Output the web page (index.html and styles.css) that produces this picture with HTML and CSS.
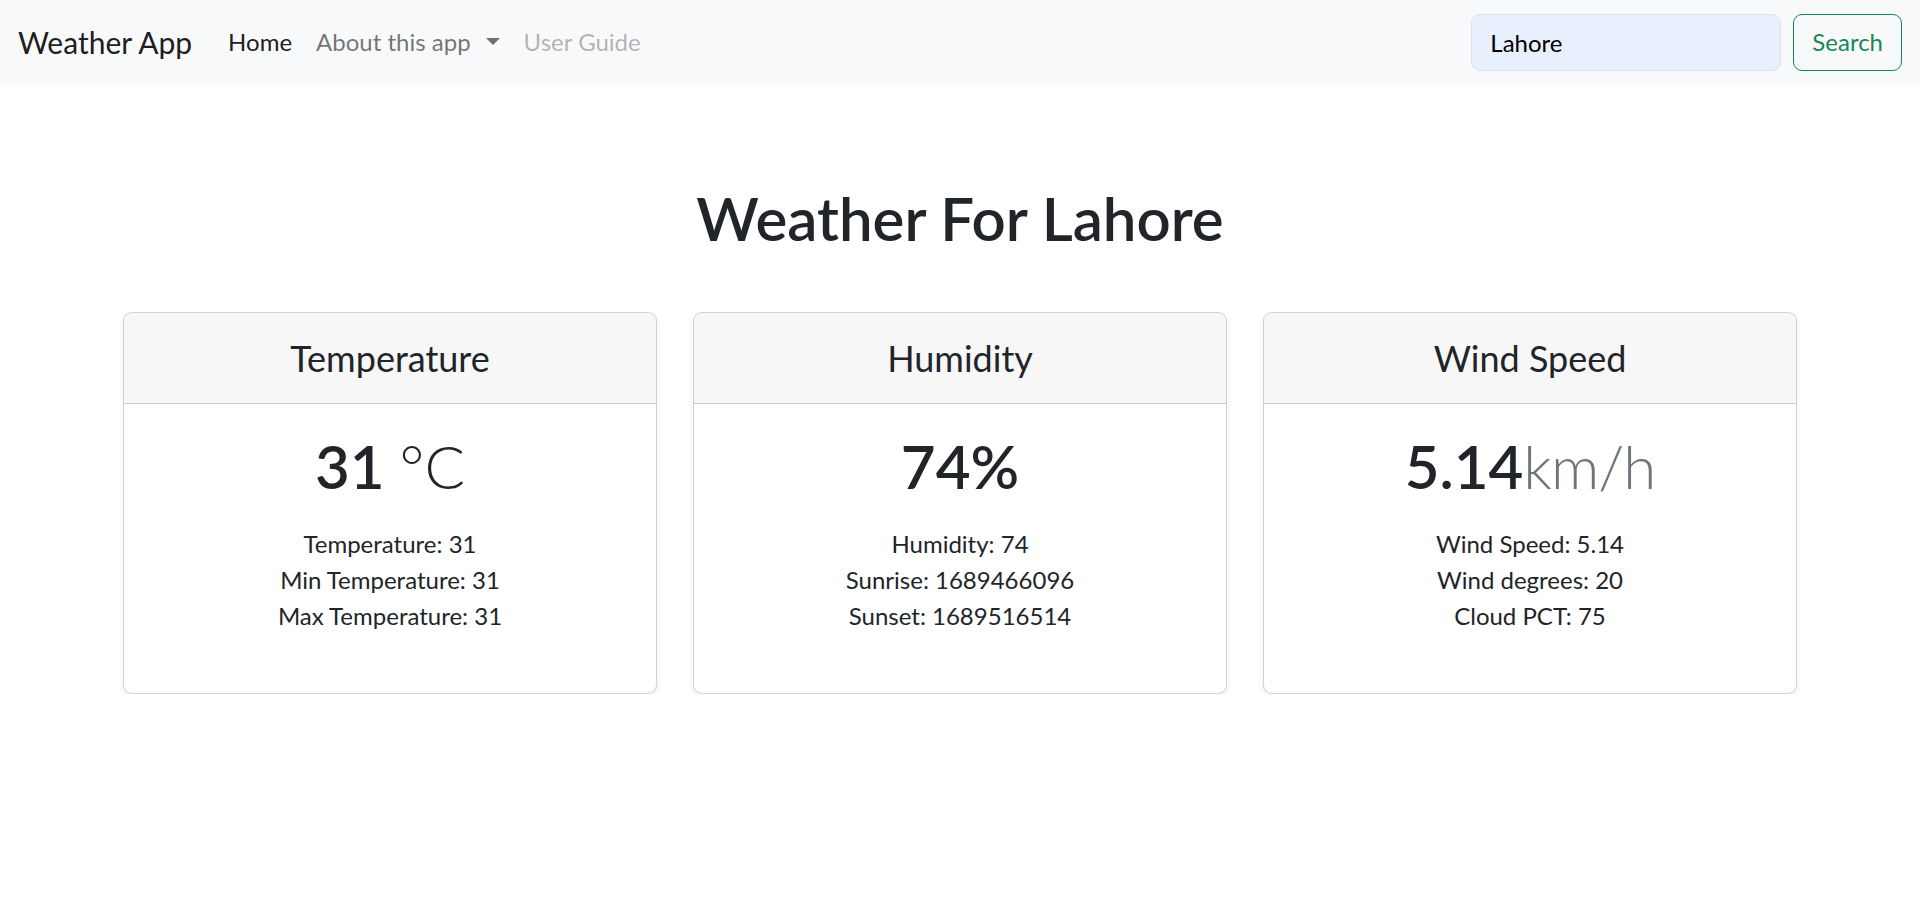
FILE: index.html
```html
<!DOCTYPE html>
<html lang="en">
<head>
<meta charset="utf-8">
<title>Weather App</title>
<link rel="stylesheet" href="styles.css">
</head>
<body>
<nav class="navbar">
  <div class="nav-left">
    <a class="brand" href="#">Weather App</a>
    <ul class="nav-list">
      <li><a class="nav-link active" href="#">Home</a></li>
      <li><a class="nav-link dropdown" href="#">About this app</a></li>
      <li><a class="nav-link disabled">User Guide</a></li>
    </ul>
  </div>
  <form class="search-form">
    <input class="search-input" type="search" value="Lahore" aria-label="Search">
    <button class="search-btn" type="button">Search</button>
  </form>
</nav>

<main class="container">
  <div class="page-header">
    <h1 class="page-title">Weather For Lahore</h1>
  </div>

  <div class="card-row">
    <div class="card">
      <div class="card-header"><h4 class="card-heading">Temperature</h4></div>
      <div class="card-body">
        <h1 class="card-title">31 <span class="unit-light">°C</span></h1>
        <ul class="stats">
          <li>Temperature: 31</li>
          <li>Min Temperature: 31</li>
          <li>Max Temperature: 31</li>
        </ul>
      </div>
    </div>

    <div class="card">
      <div class="card-header"><h4 class="card-heading">Humidity</h4></div>
      <div class="card-body">
        <h1 class="card-title">74%</h1>
        <ul class="stats">
          <li>Humidity: 74</li>
          <li>Sunrise: 1689466096</li>
          <li>Sunset: 1689516514</li>
        </ul>
      </div>
    </div>

    <div class="card">
      <div class="card-header"><h4 class="card-heading">Wind Speed</h4></div>
      <div class="card-body">
        <h1 class="card-title">5.14<span class="unit-muted">km/h</span></h1>
        <ul class="stats">
          <li>Wind Speed: 5.14</li>
          <li>Wind degrees: 20</li>
          <li>Cloud PCT: 75</li>
        </ul>
      </div>
    </div>
  </div>
</main>
</body>
</html>
```
FILE: styles.css
```css
* { box-sizing: border-box; }

body {
  margin: 0;
  font-family: Lato, "Open Sans", sans-serif;
  font-size: 24px;
  line-height: 1.5;
  color: #212529;
  background: #fff;
}

a { text-decoration: none; }

/* Navbar */
.navbar {
  display: flex;
  align-items: center;
  justify-content: space-between;
  background: #f8f9fa;
  padding: 12px 18px;
  height: 84px;
}
.nav-left {
  display: flex;
  align-items: center;
}
.brand {
  font-size: 30px;
  line-height: 45px;
  padding: 7.5px 0;
  margin-right: 24px;
  color: rgba(0, 0, 0, 0.9);
}
.nav-list {
  display: flex;
  list-style: none;
  margin: 0;
  padding: 0;
}
.nav-link {
  display: block;
  padding: 12px;
  font-size: 24px;
  line-height: 36px;
  color: rgba(0, 0, 0, 0.55);
}
.nav-link.active { color: rgba(0, 0, 0, 0.9); }
.nav-link.disabled { color: rgba(0, 0, 0, 0.3); }
.dropdown::after {
  content: "";
  display: inline-block;
  margin-left: 15px;
  vertical-align: 6px;
  border-top: 7px solid;
  border-right: 7px solid transparent;
  border-left: 7px solid transparent;
  border-bottom: 0;
}

.search-form {
  display: flex;
  align-items: center;
}
.search-input {
  width: 310px;
  height: 57px;
  margin-right: 12px;
  padding: 9px 18px;
  font-family: inherit;
  font-size: 24px;
  line-height: 36px;
  color: #000;
  background: #e8f0fe;
  border: 1.5px solid #dee2e6;
  border-radius: 9px;
  outline: none;
}
.search-btn {
  height: 57px;
  padding: 9px 18px;
  font-family: inherit;
  font-size: 24px;
  line-height: 36px;
  color: #198754;
  background: transparent;
  border: 1.5px solid #198754;
  border-radius: 9px;
}

/* Main */
.container {
  width: 1710px;
  margin: 0 auto;
  padding: 0 18px;
}
.page-header {
  padding-top: 98px;
  padding-bottom: 58px;
  text-align: center;
}
.page-title {
  margin: 0;
  font-size: 60px;
  font-weight: 600;
  line-height: 72px;
}

.card-row {
  display: grid;
  grid-template-columns: repeat(3, 1fr);
  gap: 36px;
}
.card {
  border: 1.5px solid rgba(0, 0, 0, 0.175);
  border-radius: 9px;
  box-shadow: 0 3px 6px rgba(0, 0, 0, 0.075);
  text-align: center;
  overflow: hidden;
  background: #fff;
}
.card-header {
  padding: 24px 24px 23px;
  background: rgba(0, 0, 0, 0.03);
  border-bottom: 1.5px solid rgba(0, 0, 0, 0.175);
}
.card-heading {
  margin: 0;
  font-size: 36px;
  font-weight: 400;
  line-height: 43.2px;
}
.card-body {
  padding: 26px 24px 24px;
}
.card-title {
  margin: 0;
  font-size: 60px;
  font-weight: 600;
  line-height: 72px;
}
.unit-light { font-weight: 300; }
.unit-muted {
  font-weight: 300;
  color: #6c757d;
  letter-spacing: -1px;
}

.stats {
  list-style: none;
  margin: 24px 0 35px;
  padding: 0;
  line-height: 36px;
}
```
